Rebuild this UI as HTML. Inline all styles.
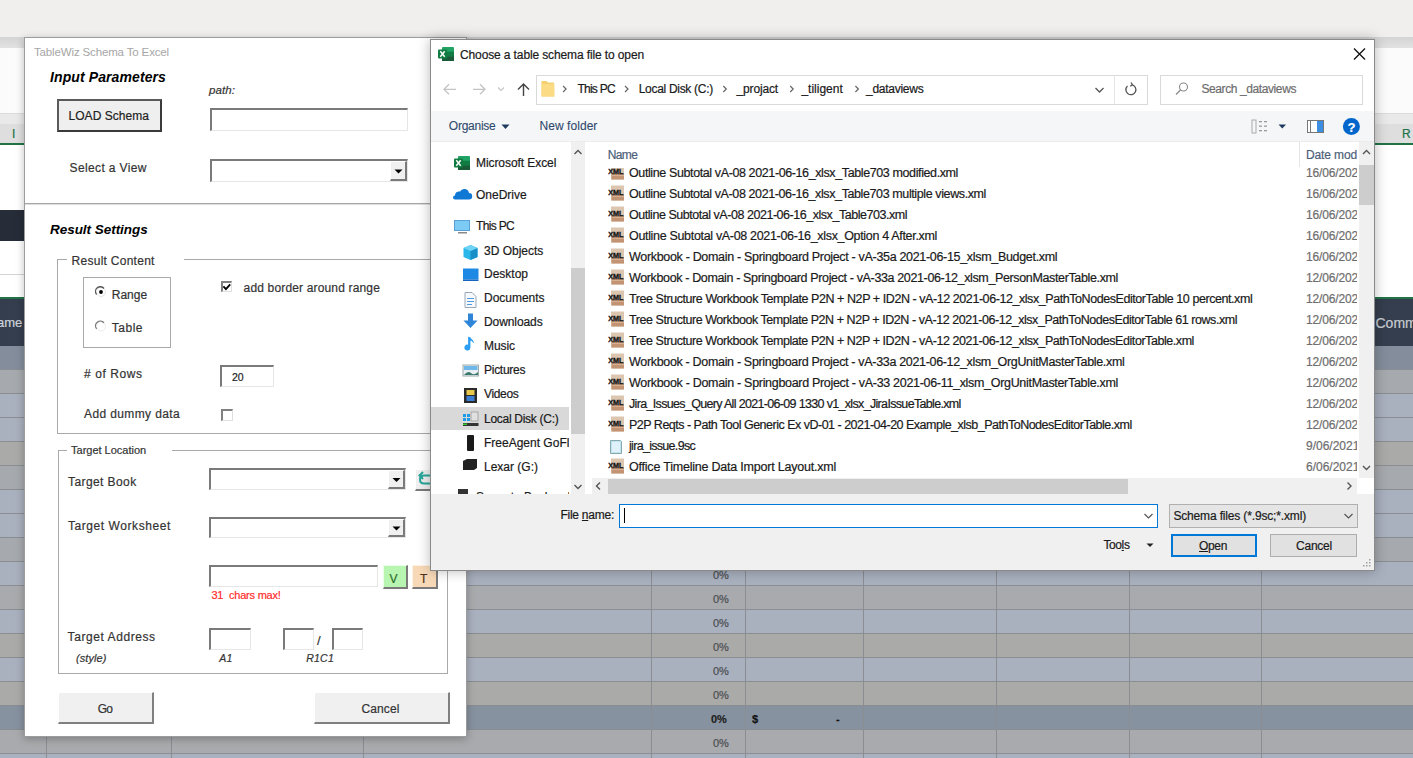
<!DOCTYPE html>
<html><head><meta charset="utf-8"><style>
html,body{margin:0;padding:0;width:1413px;height:758px;overflow:hidden;background:#f0efee;font-family:"Liberation Sans", sans-serif;}
.t{position:absolute;white-space:pre;}
.b{position:absolute;box-sizing:border-box;}
svg{position:absolute;overflow:visible;}
</style></head><body>
<div class="b" style="left:0px;top:0px;width:1413px;height:37px;background:#f0efee"></div>
<div class="b" style="left:0px;top:37px;width:1413px;height:11px;background:linear-gradient(#d4d4d4,#e2e2e2)"></div>
<div class="b" style="left:0px;top:48px;width:1413px;height:65px;background:#fbfbfb"></div>
<div class="b" style="left:0px;top:113px;width:1413px;height:11px;background:#e9e9e9;border-top:1px solid #dcdcdc"></div>
<div class="b" style="left:0px;top:124px;width:1413px;height:19px;background:#dedede"></div>
<div class="b" style="left:0px;top:143px;width:1413px;height:2px;background:#217346"></div>
<div class="b" style="left:0px;top:145px;width:1413px;height:152px;background:#ffffff"></div>
<div class="b" style="left:0px;top:210px;width:300px;height:31px;background:#262c38"></div>
<div class="b" style="left:0px;top:274px;width:300px;height:1px;background:#d4d4d4"></div>
<div class="b" style="left:0px;top:297px;width:1413px;height:2px;background:#217346"></div>
<div class="b" style="left:0px;top:299px;width:1413px;height:47px;background:#353e4e"></div>
<div class="t" style="left:12px;top:127.84px;font-size:12px;line-height:12px;color:#217346;;-webkit-text-stroke:0.2px #217346;">I</div>
<div class="t" style="left:1402px;top:127.84px;font-size:12px;line-height:12px;color:#217346;;-webkit-text-stroke:0.2px #217346;">R</div>
<div class="t" style="left:-3px;top:316.00px;font-size:13px;line-height:13px;color:#d0d4da;;-webkit-text-stroke:0.2px #d0d4da;">ame</div>
<div class="t" style="left:1375.5px;top:315.55px;font-size:14px;line-height:14px;color:#c8ccd2;;-webkit-text-stroke:0.2px #c8ccd2;">Comm</div>
<div class="b" style="left:0px;top:346px;width:1413px;height:24px;background:#838d9b"></div>
<div class="b" style="left:0px;top:369px;width:1413px;height:1px;background:#8a8d92"></div>
<div class="b" style="left:0px;top:370px;width:1413px;height:24px;background:#a6a9ad"></div>
<div class="b" style="left:0px;top:393px;width:1413px;height:1px;background:#8a8d92"></div>
<div class="b" style="left:0px;top:394px;width:1413px;height:24px;background:#a9b0be"></div>
<div class="b" style="left:0px;top:417px;width:1413px;height:1px;background:#8a8d92"></div>
<div class="b" style="left:0px;top:418px;width:1413px;height:24px;background:#a9b0be"></div>
<div class="b" style="left:0px;top:441px;width:1413px;height:1px;background:#8a8d92"></div>
<div class="b" style="left:0px;top:442px;width:1413px;height:24px;background:#aaaaa8"></div>
<div class="b" style="left:0px;top:465px;width:1413px;height:1px;background:#8a8d92"></div>
<div class="b" style="left:0px;top:466px;width:1413px;height:24px;background:#a6a9ad"></div>
<div class="b" style="left:0px;top:489px;width:1413px;height:1px;background:#8a8d92"></div>
<div class="b" style="left:0px;top:490px;width:1413px;height:24px;background:#a9b0be"></div>
<div class="b" style="left:0px;top:513px;width:1413px;height:1px;background:#8a8d92"></div>
<div class="b" style="left:0px;top:514px;width:1413px;height:24px;background:#a9b0be"></div>
<div class="b" style="left:0px;top:537px;width:1413px;height:1px;background:#8a8d92"></div>
<div class="b" style="left:0px;top:538px;width:1413px;height:24px;background:#a6a9ad"></div>
<div class="b" style="left:0px;top:561px;width:1413px;height:1px;background:#8a8d92"></div>
<div class="b" style="left:0px;top:562px;width:1413px;height:24px;background:#a9b0be"></div>
<div class="b" style="left:0px;top:585px;width:1413px;height:1px;background:#8a8d92"></div>
<div class="b" style="left:0px;top:586px;width:1413px;height:24px;background:#a8aaad"></div>
<div class="b" style="left:0px;top:609px;width:1413px;height:1px;background:#8a8d92"></div>
<div class="b" style="left:0px;top:610px;width:1413px;height:24px;background:#a9b0be"></div>
<div class="b" style="left:0px;top:633px;width:1413px;height:1px;background:#8a8d92"></div>
<div class="b" style="left:0px;top:634px;width:1413px;height:24px;background:#aaaaa8"></div>
<div class="b" style="left:0px;top:657px;width:1413px;height:1px;background:#8a8d92"></div>
<div class="b" style="left:0px;top:658px;width:1413px;height:24px;background:#a9b0be"></div>
<div class="b" style="left:0px;top:681px;width:1413px;height:1px;background:#8a8d92"></div>
<div class="b" style="left:0px;top:682px;width:1413px;height:24px;background:#aaaaa8"></div>
<div class="b" style="left:0px;top:705px;width:1413px;height:1px;background:#8a8d92"></div>
<div class="b" style="left:0px;top:706px;width:1413px;height:24px;background:#8792a0"></div>
<div class="b" style="left:0px;top:729px;width:1413px;height:1px;background:#8a8d92"></div>
<div class="b" style="left:0px;top:730px;width:1413px;height:24px;background:#a8aaad"></div>
<div class="b" style="left:0px;top:753px;width:1413px;height:1px;background:#8a8d92"></div>
<div class="b" style="left:0px;top:754px;width:1413px;height:24px;background:#a9b0be"></div>
<div class="b" style="left:0px;top:777px;width:1413px;height:1px;background:#8a8d92"></div>
<div class="b" style="left:46px;top:346px;width:1px;height:412px;background:#8a8d92"></div>
<div class="b" style="left:171px;top:346px;width:1px;height:412px;background:#8a8d92"></div>
<div class="b" style="left:363px;top:346px;width:1px;height:412px;background:#8a8d92"></div>
<div class="b" style="left:651px;top:346px;width:1px;height:412px;background:#8a8d92"></div>
<div class="b" style="left:745px;top:346px;width:1px;height:412px;background:#8a8d92"></div>
<div class="b" style="left:863px;top:346px;width:1px;height:412px;background:#8a8d92"></div>
<div class="b" style="left:996px;top:346px;width:1px;height:412px;background:#8a8d92"></div>
<div class="b" style="left:1129px;top:346px;width:1px;height:412px;background:#8a8d92"></div>
<div class="b" style="left:1261px;top:346px;width:1px;height:412px;background:#8a8d92"></div>
<div class="t" style="left:713px;top:353.69px;font-size:11px;line-height:11px;color:#4a4d52;;-webkit-text-stroke:0.2px #4a4d52;">0%</div>
<div class="t" style="left:713px;top:377.69px;font-size:11px;line-height:11px;color:#4a4d52;;-webkit-text-stroke:0.2px #4a4d52;">0%</div>
<div class="t" style="left:713px;top:401.69px;font-size:11px;line-height:11px;color:#4a4d52;;-webkit-text-stroke:0.2px #4a4d52;">0%</div>
<div class="t" style="left:713px;top:425.69px;font-size:11px;line-height:11px;color:#4a4d52;;-webkit-text-stroke:0.2px #4a4d52;">0%</div>
<div class="t" style="left:713px;top:449.69px;font-size:11px;line-height:11px;color:#4a4d52;;-webkit-text-stroke:0.2px #4a4d52;">0%</div>
<div class="t" style="left:713px;top:473.69px;font-size:11px;line-height:11px;color:#4a4d52;;-webkit-text-stroke:0.2px #4a4d52;">0%</div>
<div class="t" style="left:713px;top:497.69px;font-size:11px;line-height:11px;color:#4a4d52;;-webkit-text-stroke:0.2px #4a4d52;">0%</div>
<div class="t" style="left:713px;top:521.69px;font-size:11px;line-height:11px;color:#4a4d52;;-webkit-text-stroke:0.2px #4a4d52;">0%</div>
<div class="t" style="left:713px;top:545.69px;font-size:11px;line-height:11px;color:#4a4d52;;-webkit-text-stroke:0.2px #4a4d52;">0%</div>
<div class="t" style="left:713px;top:569.69px;font-size:11px;line-height:11px;color:#4a4d52;;-webkit-text-stroke:0.2px #4a4d52;">0%</div>
<div class="t" style="left:713px;top:593.69px;font-size:11px;line-height:11px;color:#4a4d52;;-webkit-text-stroke:0.2px #4a4d52;">0%</div>
<div class="t" style="left:713px;top:617.69px;font-size:11px;line-height:11px;color:#4a4d52;;-webkit-text-stroke:0.2px #4a4d52;">0%</div>
<div class="t" style="left:713px;top:641.69px;font-size:11px;line-height:11px;color:#4a4d52;;-webkit-text-stroke:0.2px #4a4d52;">0%</div>
<div class="t" style="left:713px;top:665.69px;font-size:11px;line-height:11px;color:#4a4d52;;-webkit-text-stroke:0.2px #4a4d52;">0%</div>
<div class="t" style="left:713px;top:689.69px;font-size:11px;line-height:11px;color:#4a4d52;;-webkit-text-stroke:0.2px #4a4d52;">0%</div>
<div class="t" style="left:711px;top:713.69px;font-size:11px;line-height:11px;color:#222;font-weight:bold;-webkit-text-stroke:0.2px #222;">0%</div>
<div class="t" style="left:713px;top:737.69px;font-size:11px;line-height:11px;color:#4a4d52;;-webkit-text-stroke:0.2px #4a4d52;">0%</div>
<div class="t" style="left:752px;top:713.69px;font-size:11px;line-height:11px;color:#111;font-weight:bold;-webkit-text-stroke:0.2px #111;">$</div>
<div class="t" style="left:836px;top:713.69px;font-size:11px;line-height:11px;color:#111;font-weight:bold;-webkit-text-stroke:0.2px #111;">-</div>
<div class="b" style="left:24px;top:37px;width:443px;height:700px;background:#fff;border:1px solid #9c9c9c;box-shadow:0 2px 8px rgba(0,0,0,0.25)"></div>
<div class="t" style="left:34px;top:47.27px;font-size:11.5px;line-height:11.5px;color:#a6a6a6;;letter-spacing:-0.145px;">TableWiz Schema To Excel</div>
<div class="t" style="left:50px;top:70.45px;font-size:14px;line-height:14px;color:#000;font-weight:bold;font-style:italic;letter-spacing:0.102px;">Input Parameters</div>
<div class="t" style="left:209px;top:84.77px;font-size:11.5px;line-height:11.5px;color:#333;font-style:italic;-webkit-text-stroke:0.2px #333;letter-spacing:0.084px;">path:</div>
<div class="b" style="left:57px;top:99px;width:105px;height:33px;background:#efefef;border:2px solid #3a3a3a;border-top-color:#5a5a5a;border-left-color:#5a5a5a"></div>
<div class="t" style="left:68.5px;top:110.34px;font-size:12px;line-height:12px;color:#222;;-webkit-text-stroke:0.2px #222;letter-spacing:0.050px;">LOAD Schema</div>
<div class="b" style="left:210px;top:108px;width:198px;height:23px;background:#fff;border-top:2px solid #7a7a7a;border-left:2px solid #7a7a7a;border-right:1px solid #e6e6e6;border-bottom:1px solid #e6e6e6"></div>
<div class="t" style="left:69.5px;top:161.64px;font-size:12px;line-height:12px;color:#333;;-webkit-text-stroke:0.2px #333;letter-spacing:0.377px;">Select a View</div>
<div class="b" style="left:210px;top:159px;width:198px;height:23px;background:#fff;border-top:2px solid #7a7a7a;border-left:2px solid #7a7a7a;border-right:1px solid #e6e6e6;border-bottom:1px solid #e6e6e6"></div>
<div class="b" style="left:390px;top:161px;width:17px;height:20px;background:#f0f0f0;border-right:2px solid #7a7a7a;border-bottom:2px solid #7a7a7a;border-top:1px solid #fff;border-left:1px solid #fff"></div>
<svg style="left:0;top:0" width="1" height="1"><path d="M394.5 169.5h8l-4 4z" fill="#000"/></svg>
<div class="b" style="left:25px;top:203px;width:441px;height:2px;background:#a6a6a6;border-bottom:1px solid #dedede"></div>
<div class="t" style="left:50px;top:222.87px;font-size:13.5px;line-height:13.5px;color:#000;font-weight:bold;font-style:italic;letter-spacing:-0.038px;">Result Settings</div>
<div class="b" style="left:57px;top:259px;width:392px;height:175px;border:1px solid #a9a9a9;border-top:none"></div>
<div class="b" style="left:57px;top:259px;width:10px;height:1px;background:#a9a9a9"></div>
<div class="b" style="left:184px;top:259px;width:265px;height:1px;background:#a9a9a9"></div>
<div class="t" style="left:71.6px;top:254.54px;font-size:12px;line-height:12px;color:#333;;-webkit-text-stroke:0.2px #333;letter-spacing:0.265px;">Result Content</div>
<div class="b" style="left:83px;top:277px;width:88px;height:71px;border:1px solid #a9a9a9"></div>
<svg style="left:0;top:0" width="1" height="1"><circle cx="101" cy="292" r="4.5" fill="#fff" stroke="#e6e6e6" stroke-width="1"/><path d="M96.6 294.5 A4.6 4.6 0 0 1 104 288.5" fill="none" stroke="#555" stroke-width="1.3"/><circle cx="101" cy="292" r="1.9" fill="#000"/><circle cx="101" cy="326.4" r="4.5" fill="#fff" stroke="#ececec" stroke-width="1"/><path d="M96.6 328.9 A4.6 4.6 0 0 1 104 322.9" fill="none" stroke="#777" stroke-width="1.3"/></svg>
<div class="t" style="left:111.8px;top:288.64px;font-size:12px;line-height:12px;color:#333;;-webkit-text-stroke:0.2px #333;letter-spacing:-0.015px;">Range</div>
<div class="t" style="left:111.8px;top:322.34px;font-size:12px;line-height:12px;color:#333;;-webkit-text-stroke:0.2px #333;letter-spacing:0.502px;">Table</div>
<div class="b" style="left:221px;top:281px;width:11px;height:11px;background:#fff;border-top:2px solid #808080;border-left:2px solid #808080;border-right:1px solid #e0e0e0;border-bottom:1px solid #e0e0e0"></div>
<svg style="left:0;top:0" width="1" height="1"><path d="M223.4 286.3 l2.5 2.8 l4.3 -4.8" fill="none" stroke="#000" stroke-width="1.8"/></svg>
<div class="t" style="left:243.6px;top:281.84px;font-size:12px;line-height:12px;color:#333;;-webkit-text-stroke:0.2px #333;letter-spacing:0.157px;">add border around range</div>
<div class="t" style="left:84px;top:367.54px;font-size:12px;line-height:12px;color:#333;;-webkit-text-stroke:0.2px #333;letter-spacing:0.582px;"># of Rows</div>
<div class="b" style="left:220px;top:365px;width:54px;height:22px;background:#fff;border-top:2px solid #7a7a7a;border-left:2px solid #7a7a7a;border-right:1px solid #e6e6e6;border-bottom:1px solid #e6e6e6"></div>
<div class="t" style="left:232px;top:372.11px;font-size:10.5px;line-height:10.5px;color:#222;;-webkit-text-stroke:0.2px #222;">20</div>
<div class="t" style="left:84px;top:407.64px;font-size:12px;line-height:12px;color:#333;;-webkit-text-stroke:0.2px #333;letter-spacing:0.377px;">Add dummy data</div>
<div class="b" style="left:221px;top:409px;width:12px;height:12px;background:#fff;border-top:2px solid #808080;border-left:2px solid #808080;border-right:1px solid #e0e0e0;border-bottom:1px solid #e0e0e0"></div>
<div class="b" style="left:58px;top:450px;width:390px;height:224px;border:1px solid #a9a9a9;border-top:none"></div>
<div class="b" style="left:58px;top:450px;width:9px;height:1px;background:#a9a9a9"></div>
<div class="b" style="left:172px;top:450px;width:276px;height:1px;background:#a9a9a9"></div>
<div class="t" style="left:71.1px;top:445.49px;font-size:11px;line-height:11px;color:#333;;-webkit-text-stroke:0.2px #333;letter-spacing:-0.015px;">Target Location</div>
<div class="t" style="left:68px;top:475.64px;font-size:12px;line-height:12px;color:#333;;-webkit-text-stroke:0.2px #333;letter-spacing:0.414px;">Target Book</div>
<div class="b" style="left:209px;top:468px;width:197px;height:22px;background:#fff;border-top:2px solid #7a7a7a;border-left:2px solid #7a7a7a;border-right:1px solid #e6e6e6;border-bottom:1px solid #e6e6e6"></div>
<div class="b" style="left:388px;top:470px;width:17px;height:19px;background:#f0f0f0;border-right:2px solid #7a7a7a;border-bottom:2px solid #7a7a7a;border-top:1px solid #fff;border-left:1px solid #fff"></div>
<svg style="left:0;top:0" width="1" height="1"><path d="M392.5 478.0h8l-4 4z" fill="#000"/></svg>
<div class="b" style="left:415px;top:469px;width:25px;height:22px;background:#f0f0f0;border-right:2px solid #7a7a7a;border-bottom:2px solid #7a7a7a;border-top:1px solid #fff;border-left:1px solid #fff"></div>
<svg style="left:0;top:0" width="1" height="1"><path d="M431 475.5 h-7 q-4 0 -4 4 q0 4 4 4 h6" fill="none" stroke="#26a69a" stroke-width="2"/><path d="M423 472 l-3.5 3.5 l3.5 3.5" fill="none" stroke="#26a69a" stroke-width="2"/></svg>
<div class="t" style="left:68px;top:519.54px;font-size:12px;line-height:12px;color:#333;;-webkit-text-stroke:0.2px #333;letter-spacing:0.561px;">Target Worksheet</div>
<div class="b" style="left:209px;top:517px;width:197px;height:21px;background:#fff;border-top:2px solid #7a7a7a;border-left:2px solid #7a7a7a;border-right:1px solid #e6e6e6;border-bottom:1px solid #e6e6e6"></div>
<div class="b" style="left:388px;top:519px;width:17px;height:18px;background:#f0f0f0;border-right:2px solid #7a7a7a;border-bottom:2px solid #7a7a7a;border-top:1px solid #fff;border-left:1px solid #fff"></div>
<svg style="left:0;top:0" width="1" height="1"><path d="M392.5 526.5h8l-4 4z" fill="#000"/></svg>
<div class="b" style="left:209px;top:565px;width:169px;height:22px;background:#fff;border-top:2px solid #7a7a7a;border-left:2px solid #7a7a7a;border-right:1px solid #e6e6e6;border-bottom:1px solid #e6e6e6"></div>
<div class="b" style="left:383px;top:565px;width:25px;height:24px;background:#b8f5b0;border-right:2px solid #7a7a7a;border-bottom:2px solid #7a7a7a;border-top:1px solid #e8ffe8;border-left:1px solid #e8ffe8"></div>
<div class="t" style="left:389.5px;top:572.84px;font-size:12px;line-height:12px;color:#2c6e2c;;-webkit-text-stroke:0.2px #2c6e2c;">V</div>
<div class="b" style="left:412px;top:565px;width:26px;height:24px;background:#f7d9b7;border-right:2px solid #7a7a7a;border-bottom:2px solid #7a7a7a;border-top:1px solid #fff3e6;border-left:1px solid #fff3e6"></div>
<div class="t" style="left:420px;top:572.84px;font-size:12px;line-height:12px;color:#4a3020;;-webkit-text-stroke:0.2px #4a3020;">T</div>
<div class="t" style="left:211.4px;top:590.29px;font-size:11px;line-height:11px;color:#ff2b2b;;-webkit-text-stroke:0.2px #ff2b2b;letter-spacing:-0.203px;">31  chars max!</div>
<div class="t" style="left:67.6px;top:630.54px;font-size:12px;line-height:12px;color:#333;;-webkit-text-stroke:0.2px #333;letter-spacing:0.568px;">Target Address</div>
<div class="t" style="left:76px;top:653.19px;font-size:11px;line-height:11px;color:#333;font-style:italic;-webkit-text-stroke:0.2px #333;letter-spacing:0.092px;">(style)</div>
<div class="b" style="left:209px;top:628px;width:42px;height:22px;background:#fff;border-top:2px solid #7a7a7a;border-left:2px solid #7a7a7a;border-right:1px solid #e6e6e6;border-bottom:1px solid #e6e6e6"></div>
<div class="b" style="left:283px;top:628px;width:31px;height:22px;background:#fff;border-top:2px solid #7a7a7a;border-left:2px solid #7a7a7a;border-right:1px solid #e6e6e6;border-bottom:1px solid #e6e6e6"></div>
<div class="t" style="left:317px;top:634.00px;font-size:13px;line-height:13px;color:#333;;-webkit-text-stroke:0.2px #333;">/</div>
<div class="b" style="left:332px;top:628px;width:31px;height:22px;background:#fff;border-top:2px solid #7a7a7a;border-left:2px solid #7a7a7a;border-right:1px solid #e6e6e6;border-bottom:1px solid #e6e6e6"></div>
<div class="t" style="left:219.3px;top:653.11px;font-size:10.5px;line-height:10.5px;color:#333;font-style:italic;-webkit-text-stroke:0.2px #333;letter-spacing:0.228px;">A1</div>
<div class="t" style="left:306.2px;top:653.11px;font-size:10.5px;line-height:10.5px;color:#333;font-style:italic;-webkit-text-stroke:0.2px #333;letter-spacing:0.235px;">R1C1</div>
<div class="b" style="left:58px;top:692px;width:96px;height:32px;background:#f0f0f0;border-top:1px solid #fff;border-left:1px solid #fff;border-right:2px solid #808080;border-bottom:2px solid #808080"></div>
<div class="t" style="left:97.8px;top:702.74px;font-size:12px;line-height:12px;color:#333;;-webkit-text-stroke:0.2px #333;letter-spacing:-0.908px;">Go</div>
<div class="b" style="left:314px;top:692px;width:136px;height:32px;background:#f0f0f0;border-top:1px solid #fff;border-left:1px solid #fff;border-right:2px solid #808080;border-bottom:2px solid #808080"></div>
<div class="t" style="left:361.4px;top:702.74px;font-size:12px;line-height:12px;color:#333;;-webkit-text-stroke:0.2px #333;letter-spacing:0.140px;">Cancel</div>
<div class="b" style="left:430px;top:39px;width:945px;height:532px;background:#fff;border:1px solid #8a8a8a;box-shadow:0 0 12px rgba(0,0,0,0.28)"></div>
<svg style="left:438px;top:45.5px" width="16" height="16" viewBox="0 0 16 16"><rect x="4" y="1" width="12" height="14" rx="1" fill="#21a366"/><rect x="4" y="5.7" width="12" height="4.6" fill="#107c41"/><rect x="4" y="10.3" width="12" height="4.7" fill="#185c37"/><rect x="0" y="3.5" width="9" height="9" rx="1" fill="#107c41"/><path d="M2.3 5.3 L6.7 10.7 M6.7 5.3 L2.3 10.7" stroke="#fff" stroke-width="1.5"/></svg>
<div class="t" style="left:460px;top:48.64px;font-size:12px;line-height:12px;color:#1a1a1a;;-webkit-text-stroke:0.2px #1a1a1a;letter-spacing:-0.121px;">Choose a table schema file to open</div>
<svg style="left:0;top:0" width="1" height="1"><path d="M1354 48.5 L1365 59.5 M1365 48.5 L1354 59.5" stroke="#111" stroke-width="1.3"/></svg>
<svg style="left:0;top:0" width="1" height="1"><path d="M444 89.3 h12 M449 84.3 l-5 5 l5 5" fill="none" stroke="#c4c4c4" stroke-width="1.3"/><path d="M473 89.3 h12 M480 84.3 l5 5 l-5 5" fill="none" stroke="#c4c4c4" stroke-width="1.3"/><path d="M498 87.5 l3 3 l3 -3" fill="none" stroke="#c4c4c4" stroke-width="1.1"/><path d="M523.5 96 v-12 M518 89.5 l5.5 -5.5 l5.5 5.5" fill="none" stroke="#444" stroke-width="1.4"/></svg>
<div class="b" style="left:536px;top:75px;width:612px;height:30px;background:#fff;border:1px solid #d9d9d9"></div>
<div class="b" style="left:1114px;top:75px;width:1px;height:30px;background:#e5e5e5"></div>
<svg style="left:0;top:0" width="1" height="1"><path d="M541.5 81 h5 l1.5 1.5 h6 v14 h-12.5 z" fill="#f4d06f"/><rect x="541.5" y="84" width="13" height="12.5" fill="#fbdc85"/><path d="M1095.5 88 l4 4 l4 -4" fill="none" stroke="#555" stroke-width="1.3"/><path d="M1127.5 86 a5 5 0 1 0 4.5 -1.2 M1131 82.5 l1.5 2.3 l-2.3 1.5" fill="none" stroke="#555" stroke-width="1.3"/></svg>
<svg style="left:0;top:0" width="1" height="1"><path d="M563.1 86 l3 3 l-3 3" fill="none" stroke="#666" stroke-width="1.2"/></svg>
<div class="t" style="left:577.4px;top:82.84px;font-size:12px;line-height:12px;color:#1a1a1a;;-webkit-text-stroke:0.2px #1a1a1a;letter-spacing:-0.741px;">This PC</div>
<svg style="left:0;top:0" width="1" height="1"><path d="M625.0 86 l3 3 l-3 3" fill="none" stroke="#666" stroke-width="1.2"/></svg>
<div class="t" style="left:638.7px;top:82.84px;font-size:12px;line-height:12px;color:#1a1a1a;;-webkit-text-stroke:0.2px #1a1a1a;letter-spacing:-0.299px;">Local Disk (C:)</div>
<svg style="left:0;top:0" width="1" height="1"><path d="M723.3 86 l3 3 l-3 3" fill="none" stroke="#666" stroke-width="1.2"/></svg>
<div class="t" style="left:736.6px;top:82.84px;font-size:12px;line-height:12px;color:#1a1a1a;;-webkit-text-stroke:0.2px #1a1a1a;letter-spacing:-0.163px;">_projact</div>
<svg style="left:0;top:0" width="1" height="1"><path d="M790.2 86 l3 3 l-3 3" fill="none" stroke="#666" stroke-width="1.2"/></svg>
<div class="t" style="left:801.4px;top:82.84px;font-size:12px;line-height:12px;color:#1a1a1a;;-webkit-text-stroke:0.2px #1a1a1a;letter-spacing:0.003px;">_tiligent</div>
<svg style="left:0;top:0" width="1" height="1"><path d="M855.4 86 l3 3 l-3 3" fill="none" stroke="#666" stroke-width="1.2"/></svg>
<div class="t" style="left:866px;top:82.84px;font-size:12px;line-height:12px;color:#1a1a1a;;-webkit-text-stroke:0.2px #1a1a1a;letter-spacing:-0.265px;">_dataviews</div>
<div class="b" style="left:1160px;top:75px;width:203px;height:30px;background:#fff;border:1px solid #d9d9d9"></div>
<svg style="left:0;top:0" width="1" height="1"><circle cx="1183.5" cy="87" r="4" fill="none" stroke="#888" stroke-width="1.1"/><path d="M1180.5 90 l-4.5 4.5" stroke="#888" stroke-width="1.2"/></svg>
<div class="t" style="left:1201.4px;top:82.84px;font-size:12px;line-height:12px;color:#6d6d6d;;-webkit-text-stroke:0.2px #6d6d6d;letter-spacing:-0.399px;">Search _dataviews</div>
<div class="b" style="left:431px;top:111px;width:943px;height:31px;background:#f5f6f7;border-bottom:1px solid #ececec"></div>
<div class="t" style="left:448.8px;top:119.84px;font-size:12px;line-height:12px;color:#2f4a6d;;-webkit-text-stroke:0.1px #2f4a6d;letter-spacing:-0.250px;">Organise</div>
<svg style="left:0;top:0" width="1" height="1"><path d="M501.5 124.5 h8 l-4 4.5z" fill="#1e3a5f"/></svg>
<div class="t" style="left:539.6px;top:119.84px;font-size:12px;line-height:12px;color:#2f4a6d;;-webkit-text-stroke:0.1px #2f4a6d;letter-spacing:0.044px;">New folder</div>
<svg style="left:0;top:0" width="1" height="1"><g fill="#9a9a9a"><rect x="1252" y="120" width="4" height="13" fill="none" stroke="#aaa" stroke-width="1"/><rect x="1259" y="121" width="3" height="1.3"/><rect x="1264" y="121" width="3" height="1.3"/><rect x="1259" y="125.5" width="3" height="1.3"/><rect x="1264" y="125.5" width="3" height="1.3"/><rect x="1259" y="130" width="3" height="1.3"/><rect x="1264" y="130" width="3" height="1.3"/></g><path d="M1278.5 124.5 h7.5 l-3.75 4z" fill="#1e3a5f"/><rect x="1307.5" y="120.5" width="16" height="12" fill="#fff" stroke="#777" stroke-width="1"/><rect x="1317" y="121" width="6" height="11" fill="#3c8fe0"/><rect x="1310" y="121" width="1" height="11" fill="#777"/><circle cx="1351.4" cy="126.6" r="8.5" fill="#0066cc"/></svg>
<div class="t" style="left:1347.4px;top:120.50px;font-size:13px;line-height:13px;color:#fff;font-weight:bold;-webkit-text-stroke:0.2px #fff;">?</div>
<div class="b" style="left:571px;top:142px;width:14px;height:352px;background:#f0f0f0"></div>
<div class="b" style="left:571px;top:268px;width:14px;height:166px;background:#cdcdcd"></div>
<svg style="left:0;top:0" width="1" height="1"><path d="M574.5 154 l3.5 -3.5 l3.5 3.5" fill="none" stroke="#555" stroke-width="1.4"/><path d="M574.5 485 l3.5 3.5 l3.5 -3.5" fill="none" stroke="#555" stroke-width="1.4"/></svg>
<div class="b" style="left:431px;top:407px;width:138px;height:23px;background:#d9d9d9"></div>
<div style="position:absolute;left:0;top:0;width:1413px;height:758px;clip-path:inset(142px 844px 264px 431px)">
<div class="t" style="left:476px;top:156.54px;font-size:12px;line-height:12px;color:#1a1a1a;;-webkit-text-stroke:0.2px #1a1a1a;letter-spacing:-0.071px;">Microsoft Excel</div>
<div class="t" style="left:476px;top:188.84px;font-size:12px;line-height:12px;color:#1a1a1a;;-webkit-text-stroke:0.2px #1a1a1a;">OneDrive</div>
<div class="t" style="left:476px;top:220.44px;font-size:12px;line-height:12px;color:#1a1a1a;;-webkit-text-stroke:0.2px #1a1a1a;letter-spacing:-0.670px;">This PC</div>
<div class="t" style="left:484px;top:244.54px;font-size:12px;line-height:12px;color:#1a1a1a;;-webkit-text-stroke:0.2px #1a1a1a;">3D Objects</div>
<div class="t" style="left:484px;top:268.34px;font-size:12px;line-height:12px;color:#1a1a1a;;-webkit-text-stroke:0.2px #1a1a1a;">Desktop</div>
<div class="t" style="left:484px;top:292.34px;font-size:12px;line-height:12px;color:#1a1a1a;;-webkit-text-stroke:0.2px #1a1a1a;letter-spacing:-0.011px;">Documents</div>
<div class="t" style="left:484px;top:316.04px;font-size:12px;line-height:12px;color:#1a1a1a;;-webkit-text-stroke:0.2px #1a1a1a;letter-spacing:-0.086px;">Downloads</div>
<div class="t" style="left:484px;top:340.04px;font-size:12px;line-height:12px;color:#1a1a1a;;-webkit-text-stroke:0.2px #1a1a1a;letter-spacing:-0.069px;">Music</div>
<div class="t" style="left:484px;top:364.14px;font-size:12px;line-height:12px;color:#1a1a1a;;-webkit-text-stroke:0.2px #1a1a1a;letter-spacing:-0.270px;">Pictures</div>
<div class="t" style="left:484px;top:388.34px;font-size:12px;line-height:12px;color:#1a1a1a;;-webkit-text-stroke:0.2px #1a1a1a;letter-spacing:-0.347px;">Videos</div>
<div class="t" style="left:484px;top:412.84px;font-size:12px;line-height:12px;color:#1a1a1a;;-webkit-text-stroke:0.2px #1a1a1a;letter-spacing:-0.286px;">Local Disk (C:)</div>
<div class="t" style="left:484px;top:437.14px;font-size:12px;line-height:12px;color:#1a1a1a;;-webkit-text-stroke:0.2px #1a1a1a;">FreeAgent GoFlex Drive (F:)</div>
<div class="t" style="left:484px;top:460.84px;font-size:12px;line-height:12px;color:#1a1a1a;;-webkit-text-stroke:0.2px #1a1a1a;">Lexar (G:)</div>
<div class="t" style="left:476px;top:490.84px;font-size:12px;line-height:12px;color:#1a1a1a;;-webkit-text-stroke:0.2px #1a1a1a;">Seagate Backup Plus Drive</div>
</div>
<svg style="left:0;top:0" width="1" height="1"><path d="M455 199.5 h14 a3.2 3.2 0 0 0 0 -6.4 a4.8 4.8 0 0 0 -9 -1.5 a3.8 3.8 0 0 0 -5 3.9 a2 2 0 0 0 0 4z" fill="#0f78d4"/><rect x="454.5" y="220.5" width="15" height="10" fill="#7ccbf5" stroke="#5a9ed6" stroke-width="1"/><rect x="458" y="232" width="9" height="1.5" fill="#8a8a8a"/><path d="M470.5 245 l7 3 v9 l-7 3 l-7 -3 v-9z" fill="#29b6e8"/><path d="M470.5 251 l7 -3 v9 l-7 3z" fill="#1a8fc7"/><path d="M463.5 248 l7 3 l7 -3 l-7 -3z" fill="#6fd3f5"/><rect x="463" y="268.5" width="15.5" height="11" fill="#1e88e5"/><rect x="463" y="279.5" width="15.5" height="1.5" fill="#1565c0"/><path d="M465 292.5 h7 l4 4 v11 h-11z" fill="#f6f8fb" stroke="#9aa8b8" stroke-width="1"/><rect x="467" y="298" width="7" height="1" fill="#4a9be0"/><rect x="467" y="301" width="7" height="1" fill="#4a9be0"/><rect x="467" y="304" width="5" height="1" fill="#4a9be0"/><path d="M468 313.5 h5 v7 h4.5 l-7 7.5 l-7 -7.5 h4.5z" fill="#2f86d9"/><path d="M470 337 v10.5 a2.6 2.6 0 1 1 -1.5 -2.3 v-8.2 q4 2 5 5.5 q-1 -2 -3.5 -2.5" fill="#2a9df4" stroke="#2a9df4" stroke-width="0.8"/><rect x="463" y="365" width="15.5" height="11" fill="#e8eef3" stroke="#9aa" stroke-width="1"/><path d="M464 375 q4 -5 7 -2 t7 -1 v3z" fill="#3a7a6a"/><rect x="464" y="366" width="13.5" height="4" fill="#6fb7e8"/><rect x="464" y="388" width="13" height="15" fill="#2a2a2a"/><rect x="466.5" y="390" width="8" height="5" fill="#e8c84a"/><rect x="466.5" y="396" width="8" height="5" fill="#3b7fd4"/><rect x="463" y="414" width="3" height="3" fill="#1e9be8"/><rect x="467" y="414" width="3" height="3" fill="#1e9be8"/><rect x="463" y="418" width="3" height="3" fill="#1e9be8"/><rect x="467" y="418" width="3" height="3" fill="#1e9be8"/><rect x="471" y="412" width="7" height="9" fill="#e0e0e0" stroke="#999" stroke-width="0.8"/><rect x="463" y="423" width="15.5" height="3" fill="#333"/><rect x="463" y="423.5" width="4" height="1.5" fill="#3c3"/><rect x="467" y="435" width="7" height="16" rx="1" fill="#1a1a1a"/><path d="M463 461 l4 -2 h10 v9 l-3 2 h-11z" fill="#222"/><path d="M458 489 h10 v5 h-10z" fill="#333"/></svg>
<svg style="left:454px;top:154.8px" width="16" height="16" viewBox="0 0 16 16"><rect x="4" y="1" width="12" height="14" rx="1" fill="#21a366"/><rect x="4" y="5.7" width="12" height="4.6" fill="#107c41"/><rect x="4" y="10.3" width="12" height="4.7" fill="#185c37"/><rect x="0" y="3.5" width="9" height="9" rx="1" fill="#107c41"/><path d="M2.3 5.3 L6.7 10.7 M6.7 5.3 L2.3 10.7" stroke="#fff" stroke-width="1.5"/></svg>
<div class="t" style="left:607.7px;top:149.24px;font-size:12px;line-height:12px;color:#4c607a;;-webkit-text-stroke:0.2px #4c607a;letter-spacing:-0.579px;">Name</div>
<div class="b" style="left:1299px;top:142px;width:1px;height:25px;background:#e5e5e5"></div>
<div class="t" style="left:1306px;top:149.44px;font-size:12px;line-height:12px;color:#4c607a;;-webkit-text-stroke:0.2px #4c607a;letter-spacing:-0.129px;">Date mod</div>
<div class="t" style="left:629px;top:166.52px;font-size:12.5px;line-height:12.5px;color:#1a1a1a;;-webkit-text-stroke:0.2px #1a1a1a;letter-spacing:-0.388px;">Outline Subtotal vA-08 2021-06-16_xlsx_Table703 modified.xml</div>
<div class="t" style="left:1306px;top:166.94px;font-size:12px;line-height:12px;color:#6d6d6d;;-webkit-text-stroke:0.2px #6d6d6d;letter-spacing:-0.156px;">16/06/2021</div>
<svg style="left:608px;top:164.1px;clip-path:inset(4px 0 0 0);" width="17" height="16" viewBox="0 0 17 16"><rect x="3" y="0.5" width="13" height="15" fill="#dcc6b0"/><rect x="3.5" y="10" width="12.5" height="5.5" fill="#c29474"/><rect x="3.5" y="11" width="12.5" height="1" fill="#d6b090"/><text x="0.3" y="9.6" font-family="Liberation Sans" font-weight="bold" font-size="7.2" fill="#161616" stroke="#161616" stroke-width="0.35" textLength="15.2" lengthAdjust="spacingAndGlyphs">XML</text></svg>
<div class="t" style="left:629px;top:187.52px;font-size:12.5px;line-height:12.5px;color:#1a1a1a;;-webkit-text-stroke:0.2px #1a1a1a;letter-spacing:-0.392px;">Outline Subtotal vA-08 2021-06-16_xlsx_Table703 multiple views.xml</div>
<div class="t" style="left:1306px;top:187.94px;font-size:12px;line-height:12px;color:#6d6d6d;;-webkit-text-stroke:0.2px #6d6d6d;letter-spacing:-0.156px;">16/06/2021</div>
<svg style="left:608px;top:185.1px;" width="17" height="16" viewBox="0 0 17 16"><rect x="3" y="0.5" width="13" height="15" fill="#dcc6b0"/><rect x="3.5" y="10" width="12.5" height="5.5" fill="#c29474"/><rect x="3.5" y="11" width="12.5" height="1" fill="#d6b090"/><text x="0.3" y="9.6" font-family="Liberation Sans" font-weight="bold" font-size="7.2" fill="#161616" stroke="#161616" stroke-width="0.35" textLength="15.2" lengthAdjust="spacingAndGlyphs">XML</text></svg>
<div class="t" style="left:629px;top:208.52px;font-size:12.5px;line-height:12.5px;color:#1a1a1a;;-webkit-text-stroke:0.2px #1a1a1a;letter-spacing:-0.462px;">Outline Subtotal vA-08 2021-06-16_xlsx_Table703.xml</div>
<div class="t" style="left:1306px;top:208.94px;font-size:12px;line-height:12px;color:#6d6d6d;;-webkit-text-stroke:0.2px #6d6d6d;letter-spacing:-0.156px;">16/06/2021</div>
<svg style="left:608px;top:206.1px;" width="17" height="16" viewBox="0 0 17 16"><rect x="3" y="0.5" width="13" height="15" fill="#dcc6b0"/><rect x="3.5" y="10" width="12.5" height="5.5" fill="#c29474"/><rect x="3.5" y="11" width="12.5" height="1" fill="#d6b090"/><text x="0.3" y="9.6" font-family="Liberation Sans" font-weight="bold" font-size="7.2" fill="#161616" stroke="#161616" stroke-width="0.35" textLength="15.2" lengthAdjust="spacingAndGlyphs">XML</text></svg>
<div class="t" style="left:629px;top:229.52px;font-size:12.5px;line-height:12.5px;color:#1a1a1a;;-webkit-text-stroke:0.2px #1a1a1a;letter-spacing:-0.326px;">Outline Subtotal vA-08 2021-06-16_xlsx_Option 4 After.xml</div>
<div class="t" style="left:1306px;top:229.94px;font-size:12px;line-height:12px;color:#6d6d6d;;-webkit-text-stroke:0.2px #6d6d6d;letter-spacing:-0.156px;">16/06/2021</div>
<svg style="left:608px;top:227.1px;" width="17" height="16" viewBox="0 0 17 16"><rect x="3" y="0.5" width="13" height="15" fill="#dcc6b0"/><rect x="3.5" y="10" width="12.5" height="5.5" fill="#c29474"/><rect x="3.5" y="11" width="12.5" height="1" fill="#d6b090"/><text x="0.3" y="9.6" font-family="Liberation Sans" font-weight="bold" font-size="7.2" fill="#161616" stroke="#161616" stroke-width="0.35" textLength="15.2" lengthAdjust="spacingAndGlyphs">XML</text></svg>
<div class="t" style="left:629px;top:250.52px;font-size:12.5px;line-height:12.5px;color:#1a1a1a;;-webkit-text-stroke:0.2px #1a1a1a;letter-spacing:-0.317px;">Workbook - Domain - Springboard Project - vA-35a 2021-06-15_xlsm_Budget.xml</div>
<div class="t" style="left:1306px;top:250.94px;font-size:12px;line-height:12px;color:#6d6d6d;;-webkit-text-stroke:0.2px #6d6d6d;letter-spacing:-0.156px;">16/06/2021</div>
<svg style="left:608px;top:248.10000000000002px;" width="17" height="16" viewBox="0 0 17 16"><rect x="3" y="0.5" width="13" height="15" fill="#dcc6b0"/><rect x="3.5" y="10" width="12.5" height="5.5" fill="#c29474"/><rect x="3.5" y="11" width="12.5" height="1" fill="#d6b090"/><text x="0.3" y="9.6" font-family="Liberation Sans" font-weight="bold" font-size="7.2" fill="#161616" stroke="#161616" stroke-width="0.35" textLength="15.2" lengthAdjust="spacingAndGlyphs">XML</text></svg>
<div class="t" style="left:629px;top:271.52px;font-size:12.5px;line-height:12.5px;color:#1a1a1a;;-webkit-text-stroke:0.2px #1a1a1a;letter-spacing:-0.362px;">Workbook - Domain - Springboard Project - vA-33a 2021-06-12_xlsm_PersonMasterTable.xml</div>
<div class="t" style="left:1306px;top:271.94px;font-size:12px;line-height:12px;color:#6d6d6d;;-webkit-text-stroke:0.2px #6d6d6d;letter-spacing:-0.156px;">12/06/2021</div>
<svg style="left:608px;top:269.1px;" width="17" height="16" viewBox="0 0 17 16"><rect x="3" y="0.5" width="13" height="15" fill="#dcc6b0"/><rect x="3.5" y="10" width="12.5" height="5.5" fill="#c29474"/><rect x="3.5" y="11" width="12.5" height="1" fill="#d6b090"/><text x="0.3" y="9.6" font-family="Liberation Sans" font-weight="bold" font-size="7.2" fill="#161616" stroke="#161616" stroke-width="0.35" textLength="15.2" lengthAdjust="spacingAndGlyphs">XML</text></svg>
<div class="t" style="left:629px;top:292.52px;font-size:12.5px;line-height:12.5px;color:#1a1a1a;;-webkit-text-stroke:0.2px #1a1a1a;letter-spacing:-0.434px;">Tree Structure Workbook Template P2N + N2P + ID2N - vA-12 2021-06-12_xlsx_PathToNodesEditorTable 10 percent.xml</div>
<div class="t" style="left:1306px;top:292.94px;font-size:12px;line-height:12px;color:#6d6d6d;;-webkit-text-stroke:0.2px #6d6d6d;letter-spacing:-0.156px;">12/06/2021</div>
<svg style="left:608px;top:290.1px;" width="17" height="16" viewBox="0 0 17 16"><rect x="3" y="0.5" width="13" height="15" fill="#dcc6b0"/><rect x="3.5" y="10" width="12.5" height="5.5" fill="#c29474"/><rect x="3.5" y="11" width="12.5" height="1" fill="#d6b090"/><text x="0.3" y="9.6" font-family="Liberation Sans" font-weight="bold" font-size="7.2" fill="#161616" stroke="#161616" stroke-width="0.35" textLength="15.2" lengthAdjust="spacingAndGlyphs">XML</text></svg>
<div class="t" style="left:629px;top:313.52px;font-size:12.5px;line-height:12.5px;color:#1a1a1a;;-webkit-text-stroke:0.2px #1a1a1a;letter-spacing:-0.445px;">Tree Structure Workbook Template P2N + N2P + ID2N - vA-12 2021-06-12_xlsx_PathToNodesEditorTable 61 rows.xml</div>
<div class="t" style="left:1306px;top:313.94px;font-size:12px;line-height:12px;color:#6d6d6d;;-webkit-text-stroke:0.2px #6d6d6d;letter-spacing:-0.156px;">12/06/2021</div>
<svg style="left:608px;top:311.1px;" width="17" height="16" viewBox="0 0 17 16"><rect x="3" y="0.5" width="13" height="15" fill="#dcc6b0"/><rect x="3.5" y="10" width="12.5" height="5.5" fill="#c29474"/><rect x="3.5" y="11" width="12.5" height="1" fill="#d6b090"/><text x="0.3" y="9.6" font-family="Liberation Sans" font-weight="bold" font-size="7.2" fill="#161616" stroke="#161616" stroke-width="0.35" textLength="15.2" lengthAdjust="spacingAndGlyphs">XML</text></svg>
<div class="t" style="left:629px;top:334.52px;font-size:12.5px;line-height:12.5px;color:#1a1a1a;;-webkit-text-stroke:0.2px #1a1a1a;letter-spacing:-0.439px;">Tree Structure Workbook Template P2N + N2P + ID2N - vA-12 2021-06-12_xlsx_PathToNodesEditorTable.xml</div>
<div class="t" style="left:1306px;top:334.94px;font-size:12px;line-height:12px;color:#6d6d6d;;-webkit-text-stroke:0.2px #6d6d6d;letter-spacing:-0.156px;">12/06/2021</div>
<svg style="left:608px;top:332.1px;" width="17" height="16" viewBox="0 0 17 16"><rect x="3" y="0.5" width="13" height="15" fill="#dcc6b0"/><rect x="3.5" y="10" width="12.5" height="5.5" fill="#c29474"/><rect x="3.5" y="11" width="12.5" height="1" fill="#d6b090"/><text x="0.3" y="9.6" font-family="Liberation Sans" font-weight="bold" font-size="7.2" fill="#161616" stroke="#161616" stroke-width="0.35" textLength="15.2" lengthAdjust="spacingAndGlyphs">XML</text></svg>
<div class="t" style="left:629px;top:355.52px;font-size:12.5px;line-height:12.5px;color:#1a1a1a;;-webkit-text-stroke:0.2px #1a1a1a;letter-spacing:-0.323px;">Workbook - Domain - Springboard Project - vA-33a 2021-06-12_xlsm_OrgUnitMasterTable.xml</div>
<div class="t" style="left:1306px;top:355.94px;font-size:12px;line-height:12px;color:#6d6d6d;;-webkit-text-stroke:0.2px #6d6d6d;letter-spacing:-0.156px;">12/06/2021</div>
<svg style="left:608px;top:353.1px;" width="17" height="16" viewBox="0 0 17 16"><rect x="3" y="0.5" width="13" height="15" fill="#dcc6b0"/><rect x="3.5" y="10" width="12.5" height="5.5" fill="#c29474"/><rect x="3.5" y="11" width="12.5" height="1" fill="#d6b090"/><text x="0.3" y="9.6" font-family="Liberation Sans" font-weight="bold" font-size="7.2" fill="#161616" stroke="#161616" stroke-width="0.35" textLength="15.2" lengthAdjust="spacingAndGlyphs">XML</text></svg>
<div class="t" style="left:629px;top:376.52px;font-size:12.5px;line-height:12.5px;color:#1a1a1a;;-webkit-text-stroke:0.2px #1a1a1a;letter-spacing:-0.311px;">Workbook - Domain - Springboard Project - vA-33 2021-06-11_xlsm_OrgUnitMasterTable.xml</div>
<div class="t" style="left:1306px;top:376.94px;font-size:12px;line-height:12px;color:#6d6d6d;;-webkit-text-stroke:0.2px #6d6d6d;letter-spacing:-0.156px;">12/06/2021</div>
<svg style="left:608px;top:374.1px;" width="17" height="16" viewBox="0 0 17 16"><rect x="3" y="0.5" width="13" height="15" fill="#dcc6b0"/><rect x="3.5" y="10" width="12.5" height="5.5" fill="#c29474"/><rect x="3.5" y="11" width="12.5" height="1" fill="#d6b090"/><text x="0.3" y="9.6" font-family="Liberation Sans" font-weight="bold" font-size="7.2" fill="#161616" stroke="#161616" stroke-width="0.35" textLength="15.2" lengthAdjust="spacingAndGlyphs">XML</text></svg>
<div class="t" style="left:629px;top:397.52px;font-size:12.5px;line-height:12.5px;color:#1a1a1a;;-webkit-text-stroke:0.2px #1a1a1a;letter-spacing:-0.669px;">Jira_Issues_Query All 2021-06-09 1330 v1_xlsx_JiraIssueTable.xml</div>
<div class="t" style="left:1306px;top:397.94px;font-size:12px;line-height:12px;color:#6d6d6d;;-webkit-text-stroke:0.2px #6d6d6d;letter-spacing:-0.156px;">12/06/2021</div>
<svg style="left:608px;top:395.1px;" width="17" height="16" viewBox="0 0 17 16"><rect x="3" y="0.5" width="13" height="15" fill="#dcc6b0"/><rect x="3.5" y="10" width="12.5" height="5.5" fill="#c29474"/><rect x="3.5" y="11" width="12.5" height="1" fill="#d6b090"/><text x="0.3" y="9.6" font-family="Liberation Sans" font-weight="bold" font-size="7.2" fill="#161616" stroke="#161616" stroke-width="0.35" textLength="15.2" lengthAdjust="spacingAndGlyphs">XML</text></svg>
<div class="t" style="left:629px;top:418.52px;font-size:12.5px;line-height:12.5px;color:#1a1a1a;;-webkit-text-stroke:0.2px #1a1a1a;letter-spacing:-0.503px;">P2P Reqts - Path Tool Generic Ex vD-01 - 2021-04-20 Example_xlsb_PathToNodesEditorTable.xml</div>
<div class="t" style="left:1306px;top:418.94px;font-size:12px;line-height:12px;color:#6d6d6d;;-webkit-text-stroke:0.2px #6d6d6d;letter-spacing:-0.156px;">12/06/2021</div>
<svg style="left:608px;top:416.1px;" width="17" height="16" viewBox="0 0 17 16"><rect x="3" y="0.5" width="13" height="15" fill="#dcc6b0"/><rect x="3.5" y="10" width="12.5" height="5.5" fill="#c29474"/><rect x="3.5" y="11" width="12.5" height="1" fill="#d6b090"/><text x="0.3" y="9.6" font-family="Liberation Sans" font-weight="bold" font-size="7.2" fill="#161616" stroke="#161616" stroke-width="0.35" textLength="15.2" lengthAdjust="spacingAndGlyphs">XML</text></svg>
<div class="t" style="left:629px;top:439.52px;font-size:12.5px;line-height:12.5px;color:#1a1a1a;;-webkit-text-stroke:0.2px #1a1a1a;letter-spacing:-0.695px;">jira_issue.9sc</div>
<div class="t" style="left:1306px;top:439.94px;font-size:12px;line-height:12px;color:#6d6d6d;;-webkit-text-stroke:0.2px #6d6d6d;">9/06/2021</div>
<svg style="left:608px;top:439.1px" width="16" height="16"><path d="M2.5 1.5 h10 l1 1 v12 h-11z" fill="#bfe3f2" stroke="#8aa" stroke-width="1"/><path d="M4 3 h8 v10 h-8z" fill="#dff2fa"/></svg>
<div class="t" style="left:629px;top:460.52px;font-size:12.5px;line-height:12.5px;color:#1a1a1a;;-webkit-text-stroke:0.2px #1a1a1a;letter-spacing:-0.214px;">Office Timeline Data Import Layout.xml</div>
<div class="t" style="left:1306px;top:460.94px;font-size:12px;line-height:12px;color:#6d6d6d;;-webkit-text-stroke:0.2px #6d6d6d;">6/06/2021</div>
<svg style="left:608px;top:458.1px;" width="17" height="16" viewBox="0 0 17 16"><rect x="3" y="0.5" width="13" height="15" fill="#dcc6b0"/><rect x="3.5" y="10" width="12.5" height="5.5" fill="#c29474"/><rect x="3.5" y="11" width="12.5" height="1" fill="#d6b090"/><text x="0.3" y="9.6" font-family="Liberation Sans" font-weight="bold" font-size="7.2" fill="#161616" stroke="#161616" stroke-width="0.35" textLength="15.2" lengthAdjust="spacingAndGlyphs">XML</text></svg>
<div class="b" style="left:1359px;top:142px;width:15px;height:337px;background:#f0f0f0"></div>
<div class="b" style="left:1359px;top:165px;width:15px;height:40px;background:#cdcdcd"></div>
<svg style="left:0;top:0" width="1" height="1"><path d="M1363 154 l3.5 -3.5 l3.5 3.5" fill="none" stroke="#555" stroke-width="1.4"/><path d="M1363 466 l3.5 3.5 l3.5 -3.5" fill="none" stroke="#555" stroke-width="1.4"/></svg>
<div class="b" style="left:1357px;top:142px;width:2px;height:337px;background:#fff"></div>
<div class="b" style="left:569px;top:142px;width:2px;height:352px;background:#fff"></div>
<div class="b" style="left:571px;top:142px;width:14px;height:352px;background:#f0f0f0"></div>
<div class="b" style="left:571px;top:268px;width:14px;height:166px;background:#cdcdcd"></div>
<svg style="left:0;top:0" width="1" height="1"><path d="M574.5 154 l3.5 -3.5 l3.5 3.5" fill="none" stroke="#555" stroke-width="1.4"/><path d="M574.5 485 l3.5 3.5 l3.5 -3.5" fill="none" stroke="#555" stroke-width="1.4"/></svg>
<div class="b" style="left:585px;top:142px;width:7px;height:352px;background:#fff"></div>
<div class="b" style="left:592px;top:478px;width:765px;height:16px;background:#f0f0f0"></div>
<div class="b" style="left:607.7px;top:479px;width:520.7px;height:15px;background:#cdcdcd"></div>
<div class="b" style="left:1357px;top:478px;width:17px;height:16px;background:#fff"></div>
<svg style="left:0;top:0" width="1" height="1"><path d="M600 482.5 l-3.5 3.5 l3.5 3.5" fill="none" stroke="#555" stroke-width="1.4"/><path d="M1347.5 482.5 l3.5 3.5 l-3.5 3.5" fill="none" stroke="#555" stroke-width="1.4"/></svg>
<div class="b" style="left:431px;top:494px;width:943px;height:76px;background:#f0f0f0"></div>
<div class="t" style="left:560.4px;top:509.44px;font-size:12px;line-height:12px;color:#1a1a1a;;-webkit-text-stroke:0.2px #1a1a1a;letter-spacing:-0.243px;">File <u>n</u>ame:</div>
<div class="b" style="left:619px;top:504px;width:539px;height:24px;background:#fff;border:1px solid #0078d7"></div>
<div class="b" style="left:624px;top:508px;width:1px;height:15px;background:#000"></div>
<svg style="left:0;top:0" width="1" height="1"><path d="M1144.5 514 l4 4 l4 -4" fill="none" stroke="#555" stroke-width="1.2"/></svg>
<div class="b" style="left:1169px;top:504px;width:189px;height:24px;background:#e5e5e5;border:1px solid #b0b0b0"></div>
<div class="t" style="left:1173.4px;top:509.84px;font-size:12px;line-height:12px;color:#1a1a1a;;-webkit-text-stroke:0.2px #1a1a1a;letter-spacing:-0.158px;">Schema files (*.9sc;*.xml)</div>
<svg style="left:0;top:0" width="1" height="1"><path d="M1344.5 514 l4 4 l4 -4" fill="none" stroke="#555" stroke-width="1.2"/></svg>
<div class="t" style="left:1103.4px;top:539.44px;font-size:12px;line-height:12px;color:#1a1a1a;;-webkit-text-stroke:0.2px #1a1a1a;letter-spacing:-0.383px;">Too<u>l</u>s</div>
<svg style="left:0;top:0" width="1" height="1"><path d="M1146.5 543.5 h7 l-3.5 3.5z" fill="#222"/></svg>
<div class="b" style="left:1171px;top:534px;width:86px;height:23px;background:#e1e1e1;border:2px solid #0078d7"></div>
<div class="t" style="left:1199px;top:539.84px;font-size:12px;line-height:12px;color:#1a1a1a;;-webkit-text-stroke:0.2px #1a1a1a;letter-spacing:-0.340px;"><u>O</u>pen</div>
<div class="b" style="left:1270px;top:534px;width:87px;height:23px;background:#e1e1e1;border:1px solid #adadad"></div>
<div class="t" style="left:1296px;top:539.84px;font-size:12px;line-height:12px;color:#1a1a1a;;-webkit-text-stroke:0.2px #1a1a1a;letter-spacing:-0.227px;">Cancel</div>
<svg style="left:0;top:0" width="1" height="1"><g fill="#a0a0a0"><rect x="1369" y="565" width="1.5" height="1.5"/><rect x="1366" y="565" width="1.5" height="1.5"/><rect x="1363" y="565" width="1.5" height="1.5"/><rect x="1369" y="562" width="1.5" height="1.5"/><rect x="1366" y="562" width="1.5" height="1.5"/><rect x="1369" y="559" width="1.5" height="1.5"/></g></svg>
</body></html>
